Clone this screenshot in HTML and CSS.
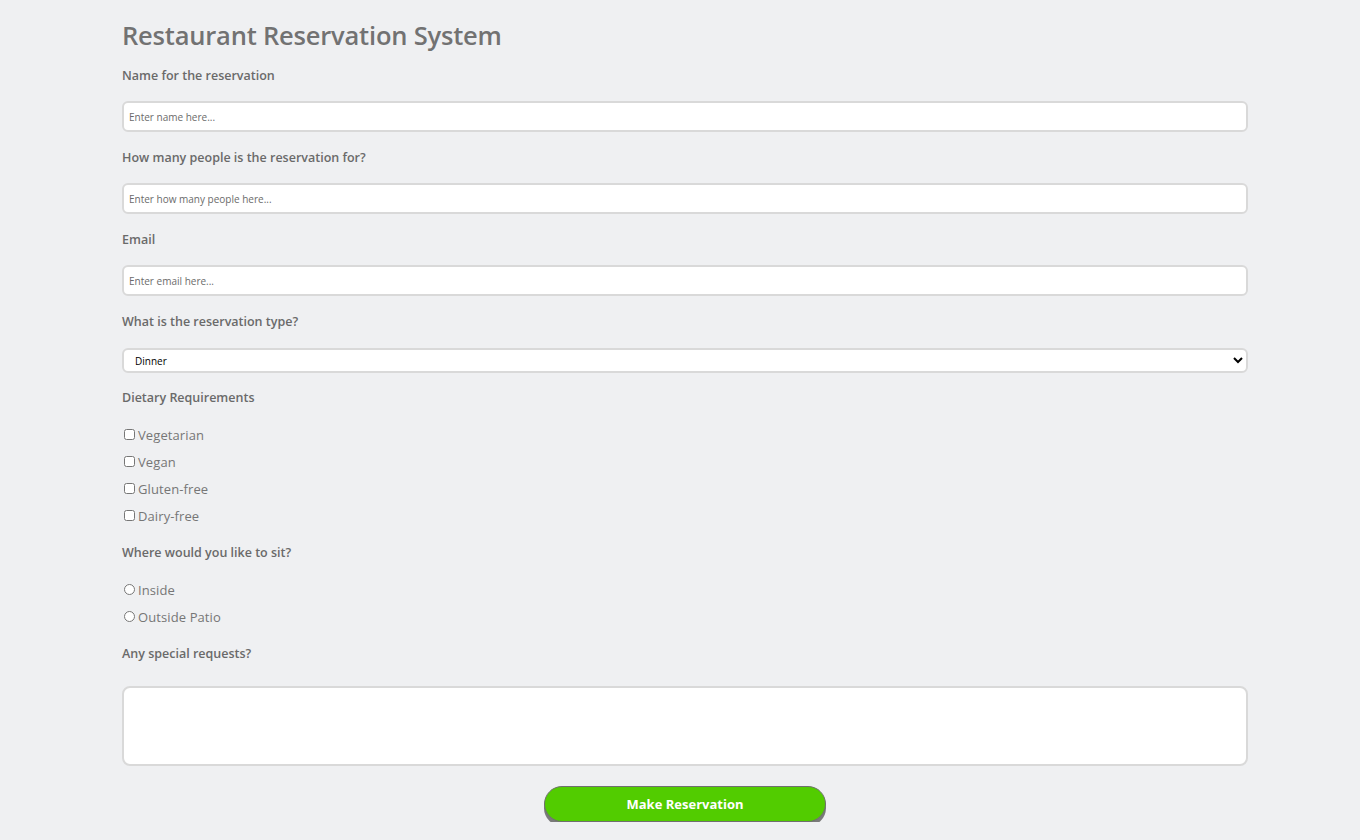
FILE: index.html
```html
<!DOCTYPE html>
<html lang="en">
<head>
<meta charset="utf-8">
<title>Restaurant Reservation System</title>
<link rel="stylesheet" href="styles.css">
</head>
<body>
<main class="page">
  <h1 class="title">Restaurant Reservation System</h1>
  <form class="form">
    <label class="label" for="name">Name for the reservation</label>
    <input class="field" id="name" type="text" placeholder="Enter name here...">

    <label class="label" for="people">How many people is the reservation for?</label>
    <input class="field" id="people" type="text" placeholder="Enter how many people here...">

    <label class="label" for="email">Email</label>
    <input class="field" id="email" type="email" placeholder="Enter email here...">

    <label class="label" for="type">What is the reservation type?</label>
    <select class="select" id="type">
      <option>Dinner</option>
      <option>Lunch</option>
      <option>Breakfast</option>
    </select>

    <p class="label label-group">Dietary Requirements</p>
    <div class="options">
      <label class="option"><input class="box" type="checkbox">Vegetarian</label>
      <label class="option"><input class="box" type="checkbox">Vegan</label>
      <label class="option"><input class="box" type="checkbox">Gluten-free</label>
      <label class="option"><input class="box" type="checkbox">Dairy-free</label>
    </div>

    <p class="label label-group">Where would you like to sit?</p>
    <div class="options">
      <label class="option"><input class="box" type="radio" name="seat">Inside</label>
      <label class="option"><input class="box" type="radio" name="seat">Outside Patio</label>
    </div>

    <label class="label label-area" for="requests">Any special requests?</label>
    <textarea class="area" id="requests"></textarea>

    <div class="actions">
      <button class="submit" type="button">Make Reservation</button>
    </div>
  </form>
</main>
</body>
</html>
```
FILE: styles.css
```css
html, body {
  margin: 0;
  padding: 0;
  background: #eff0f2;
}

body {
  font-family: "Open Sans", "DejaVu Sans", sans-serif;
  color: #6e6e6e;
}

.page {
  width: 1126px;
  margin-left: 122px;
  padding-top: 16px;
}

.title {
  margin: 0;
  height: 38px;
  line-height: 38px;
  font-size: 25.5px;
  font-weight: 600;
  color: #727272;
  letter-spacing: -0.2px;
}

.form {
  display: flex;
  flex-direction: column;
  padding-top: 11px;
}

.label {
  display: block;
  margin: 0 0 16px 0;
  height: 20px;
  line-height: 22px;
  font-size: 12.5px;
  font-weight: 600;
  color: #6a6a6a;
}

.field {
  box-sizing: border-box;
  width: 100%;
  height: 31px;
  margin: 0 0 15px 0;
  padding: 0 5px;
  border: 2px solid #d9d9d9;
  border-radius: 6px;
  background: #fff;
  font-family: "Open Sans", sans-serif;
  font-size: 10px;
  color: #333;
  outline: none;
}

.field::placeholder {
  color: #6b6b6b;
}

.select {
  box-sizing: border-box;
  width: 100%;
  height: 25px;
  margin: 1px 0 14px 0;
  padding: 0 0 0 7px;
  border: 2px solid #d9d9d9;
  border-radius: 6px;
  background-color: #fff;
  font-family: "Open Sans", sans-serif;
  font-size: 10px;
  color: #000;
}

.label-group {
  margin-bottom: 14px;
}

.options {
  display: flex;
  flex-direction: column;
  margin-bottom: 13px;
}

.option {
  display: flex;
  align-items: center;
  height: 27px;
  font-size: 13px;
  color: #767676;
  letter-spacing: 0.1px;
}

.box {
  width: 11px;
  height: 11px;
  margin: 0 3px 0 2px;
}

.label-area {
  margin-bottom: 23px;
}

.area {
  box-sizing: border-box;
  width: 100%;
  height: 80px;
  margin: 0;
  border: 2px solid #d9d9d9;
  border-radius: 8px;
  background: #fff;
  resize: none;
  outline: none;
}

.actions {
  display: flex;
  justify-content: center;
  padding-top: 20px;
}

.submit {
  width: 282px;
  height: 36px;
  border: 1px solid #6f6f6f;
  border-radius: 18px;
  background: #52cc00;
  box-shadow: 0 4px 0 #7a7a7a;
  color: #fff;
  font-family: "Open Sans", sans-serif;
  font-size: 13px;
  font-weight: 700;
  cursor: pointer;
}
```
